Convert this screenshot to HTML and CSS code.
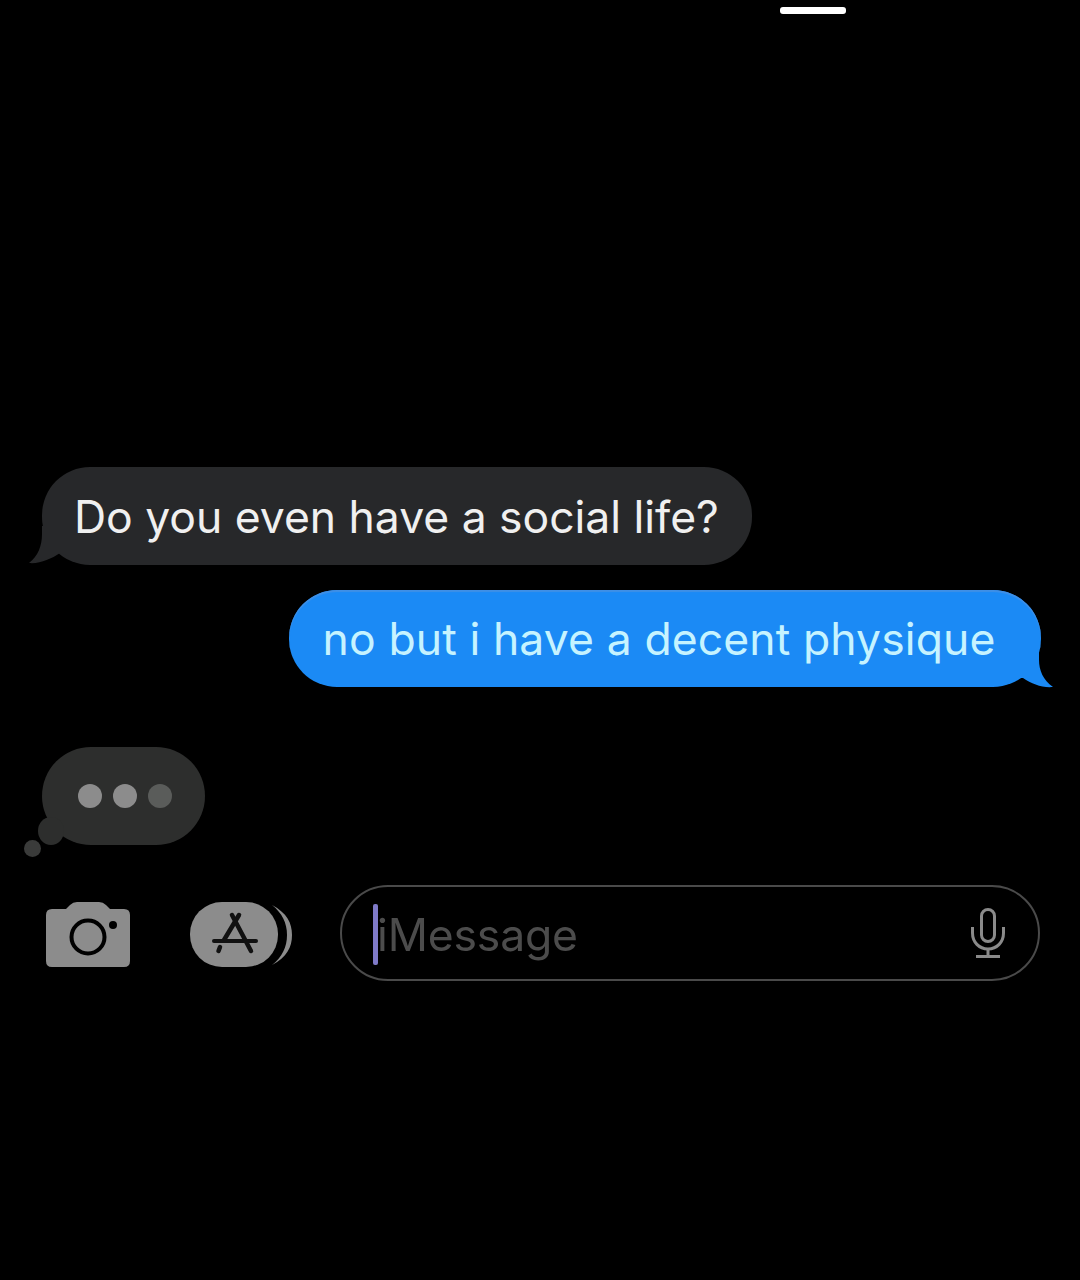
FILE: index.html
```html
<!DOCTYPE html>
<html lang="en">
<head>
  <meta charset="UTF-8">
  <meta name="viewport" content="width=device-width, initial-scale=1.0">
  <title>iMessage</title>
  <link rel="stylesheet" href="styles.css">
</head>
<body>

  <div class="top-bar">
    <div class="home-bar"></div>
  </div>

  <div class="messages">
    <div class="bubble received">
      Do you even have a social life?
      <svg class="tail tail-left" width="40" height="40" viewBox="0 0 40 40"><path d="M13 0 V8 C13 20 9 30 0 37 C11 38 22 33 31 27 L40 30 L40 0 Z"/></svg>
    </div>
    <div class="bubble sent">
      no but i have a decent physique
      <svg class="tail tail-right" width="40" height="40" viewBox="0 0 40 40"><path d="M25 0 V12 C25 22 29 32 39 39 C28 40 18 36 9 30 L0 30 L0 0 Z"/></svg>
    </div>
    <div class="typing">
      <span class="dot"></span>
      <span class="dot"></span>
      <span class="dot dim"></span>
      <span class="puff puff-big"></span>
      <span class="puff puff-small"></span>
    </div>
  </div>

  <div class="composer">
    <svg class="camera" width="84" height="68" viewBox="0 0 84 68">
      <path fill="#8c8c8c" d="M6 10 H20 L24 6 Q27 3 31 3 H53 Q57 3 60 6 L64 10 H78 Q84 10 84 16 V62 Q84 68 78 68 H6 Q0 68 0 62 V16 Q0 10 6 10 Z"/>
      <circle cx="42" cy="38" r="16.5" fill="none" stroke="#000" stroke-width="4"/>
      <circle cx="67" cy="26" r="4" fill="#000"/>
    </svg>
    <svg class="apps" width="102" height="68" viewBox="0 0 102 68">
      <rect x="0" y="3" width="88" height="65" rx="32" fill="#8c8c8c"/>
      <path d="M82 6 C97 14 102 24 102 36 C102 48 97 58 82 66 C92 58 97 48 97 36 C97 24 92 14 82 6 Z" fill="#8c8c8c"/>
      <g fill="none" stroke="#111" stroke-linecap="round">
        <path d="M49 16 L34 41" stroke-width="4.5"/>
        <path d="M42 16 L61 52" stroke-width="4.5"/>
        <path d="M24 42 H66" stroke-width="4"/>
        <path d="M30 48 L28.500 52" stroke-width="4.5"/>
      </g>
    </svg>
    <div class="input">
      <span class="caret"></span>
      <span class="input-text">iMessage</span>
      <svg class="mic" width="34" height="50" viewBox="0 0 34 50" fill="none" stroke="#8a8a8a" stroke-width="3">
        <rect x="10.500" y="1.500" width="13" height="32" rx="6.500"/>
        <path d="M1.500 19 V25 C1.500 34 8 41 17 41 C26 41 32.500 34 32.500 25 V19"/>
        <path d="M17 41 V48 M5 48.500 H29"/>
      </svg>
    </div>
  </div>

</body>
</html>
```

FILE: styles.css
```css
body {
  font-family: Inter, "Liberation Sans", sans-serif;
  margin: 0;
  height: 1280px;
  overflow: hidden;
  background-color: #000;
}

.top-bar {
  display: flex;
  justify-content: flex-end;
  padding: 7px 234px 0 0;
}

.home-bar {
  width: 66px;
  height: 7px;
  border-radius: 3px;
  background-color: #fff;
}

.messages {
  display: flex;
  flex-direction: column;
  padding: 453px 39px 0 42px;
  filter: blur(0.7px);
}

.bubble {
  position: relative;
  height: 98px;
  line-height: 100px;
  font-size: 44.5px;
  border-radius: 48px;
  white-space: nowrap;
}

.received {
  align-self: flex-start;
  padding: 0 33px 0 32px;
  letter-spacing: -0.03px;
  color: #f0f0f0;
  background-color: #27282a;
}

.sent {
  align-self: flex-end;
  margin-top: 25px;
  padding: 0 45.500px 0 33.500px;
  height: 97px;
  line-height: 99px;
  letter-spacing: 0.1px;
  color: #c6f3ff;
  background-color: #1b8af5;
  box-shadow: inset 0 2px 1px #3f8fe6;
}

.tail {
  position: absolute;
  bottom: -1px;
}

.tail-left {
  left: -13px;
  fill: #27282a;
}

.tail-right {
  right: -13px;
  fill: #1b8af5;
}

.typing {
  position: relative;
  align-self: flex-start;
  display: flex;
  align-items: center;
  gap: 11px;
  width: 163px;
  height: 98px;
  box-sizing: border-box;
  margin-top: 60px;
  padding-left: 36px;
  border-radius: 49px;
  background-color: #2d2e2d;
}

.dot {
  width: 24px;
  height: 24px;
  border-radius: 50%;
  background-color: #8c8c8c;
}

.dot.dim {
  background-color: #5a5c5a;
}

.puff {
  position: absolute;
  border-radius: 50%;
}

.puff-big {
  left: -4px;
  bottom: 0;
  width: 26px;
  height: 28px;
  background-color: #2d2e2d;
}

.puff-small {
  left: -18px;
  bottom: -12px;
  width: 17px;
  height: 17px;
  background-color: #3a3b3a;
}

.composer {
  display: flex;
  align-items: center;
  margin-top: 40px;
  padding: 0 40px 0 46px;
  filter: blur(0.7px);
}

.camera {
  flex: none;
}

.apps {
  flex: none;
  margin-left: 60px;
}

.input {
  position: relative;
  flex: 1;
  display: flex;
  align-items: center;
  height: 96px;
  box-sizing: border-box;
  margin-left: 48px;
  padding: 0 33px 0 35px;
  border: 2px solid #4a4a4a;
  border-radius: 48px;
}

.caret {
  position: absolute;
  left: 31px;
  top: 17px;
  width: 5px;
  height: 61px;
  border-radius: 2px;
  background-color: #7f7ac8;
}

.input-text {
  flex: 1;
  padding-top: 4px;
  font-size: 44.5px;
  letter-spacing: -0.15px;
  color: #4c4c4c;
}

.mic {
  flex: none;
}
```
